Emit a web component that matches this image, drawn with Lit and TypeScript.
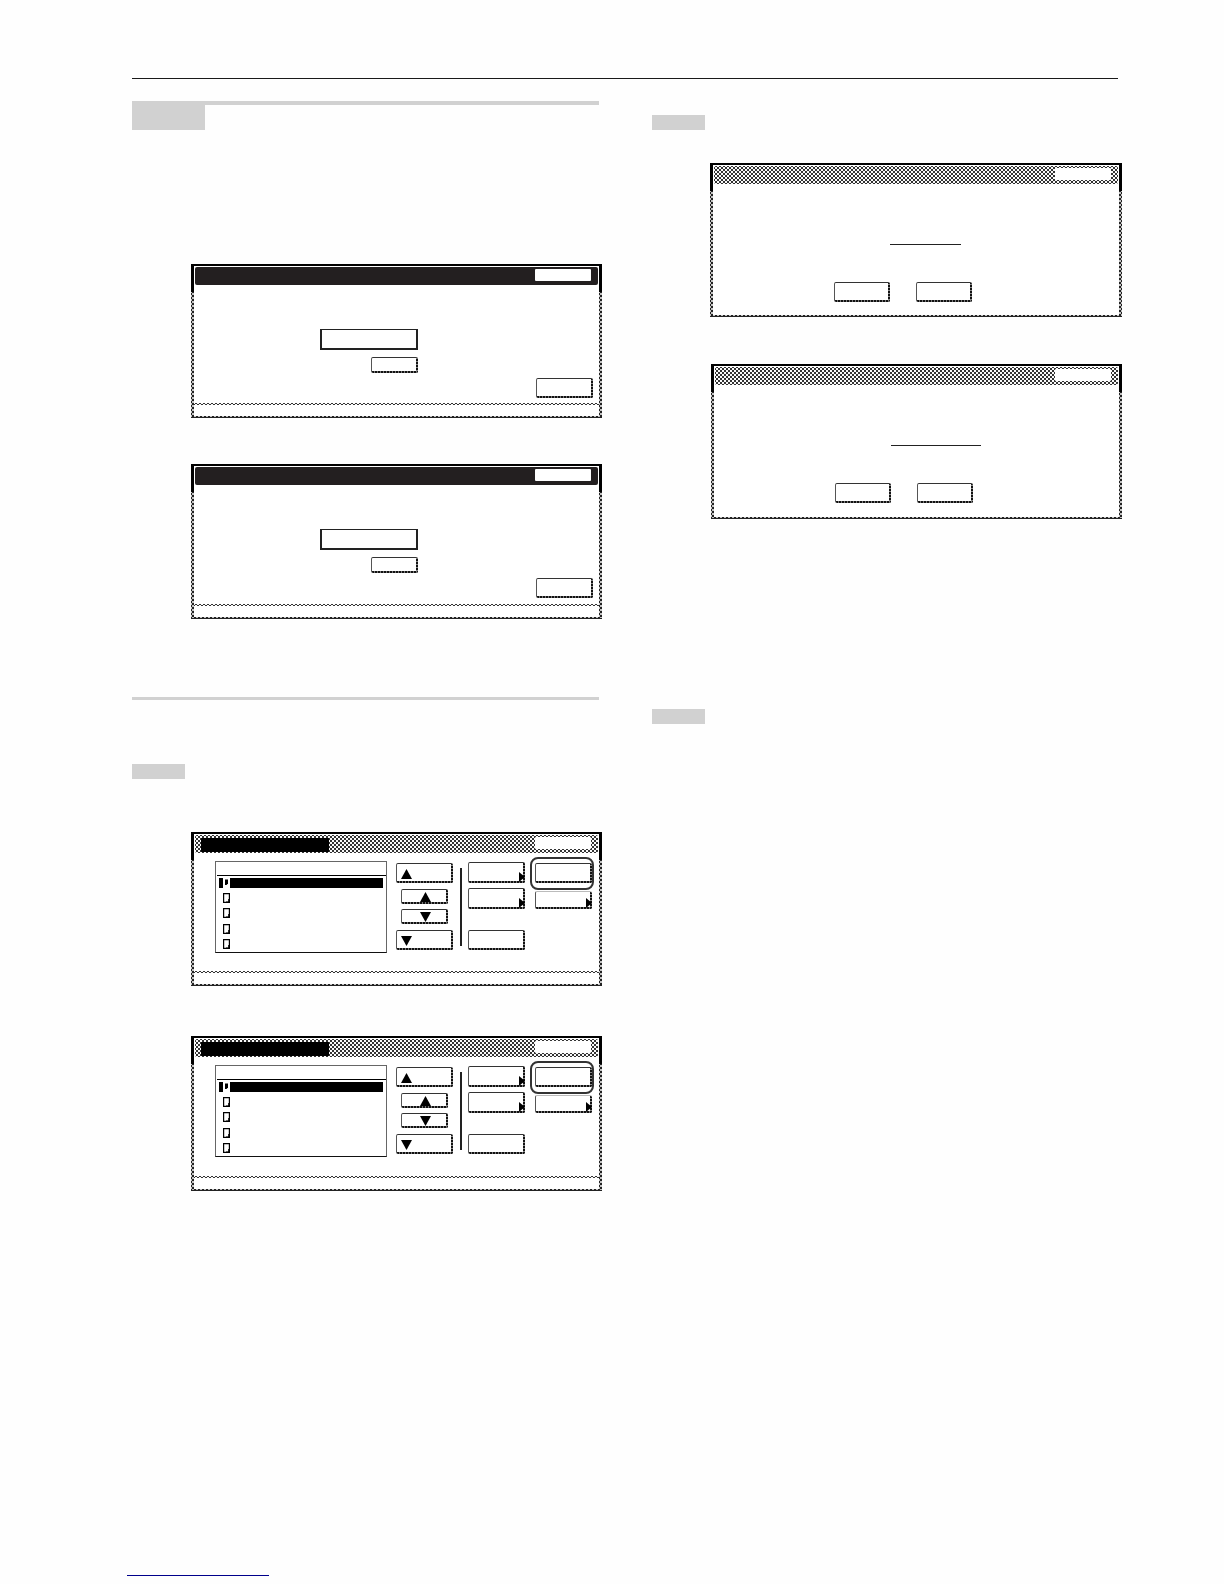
import { LitElement, html, css, svg } from "lit";
import { customElement } from "lit/decorators.js";

const tri = (down: boolean) => html`<svg class="tri" viewBox="0 0 11 10" width="11" height="10">
  ${down ? svg`<polygon points="0,0 11,0 5.5,10" fill="#000"/>` : svg`<polygon points="5.5,0 11,10 0,10" fill="#000"/>`}
</svg>`;

const page = (inv: boolean) => html`<svg class="doc" viewBox="0 0 7 10" width="7" height="10">
  ${inv
    ? svg`<path d="M0 0H7V10H0Z" fill="#fff"/><path d="M2 1.5H5V5.5L3.5 7H2Z" fill="#000"/>`
    : svg`<path d="M.6.6H6.4V9.4H.6Z" fill="#fff" stroke="#000" stroke-width="1.2"/>
          <path d="M7 6V10H3V8.4H5.2V6Z" fill="#000"/>`}
</svg>`;

@customElement("app-root")
export class AppRoot extends LitElement {
  static styles = css`
    :host {
      display: block;
      height: 1584px;
      background: #fefefe;
      font-family: "Liberation Sans", sans-serif;
      overflow: hidden;
    }
    .page { padding: 78px 0 0 132px; }
    .rule { width: 986px; height: 1px; background: #1a1a1a; }
    .cols { display: grid; grid-template-columns: 467px 470px; column-gap: 53px; }
    .col { display: flex; flex-direction: column; align-items: flex-start; }
    .sec { width: 467px; border-top: 4px solid #d1d1d1; margin-top: 22px; }
    .sec-block { width: 73px; height: 25px; background: #d1d1d1; }
    .divider { width: 467px; height: 3px; background: #d1d1d1; }
    .step { width: 53px; height: 15px; background: #d1d1d1; }
    .link { width: 142px; height: 1px; margin: 384px 0 0 -5px; background: #00008b; }

    .panel {
      box-sizing: border-box;
      width: 411px;
      height: 154px;
      padding: 2px 3px;
      background:
        linear-gradient(#222, #222) left bottom / 100% 1px no-repeat,
        linear-gradient(#000, #000) top / 100% 2px no-repeat,
        linear-gradient(#000, #000) left top / 3px 28px no-repeat,
        linear-gradient(#000, #000) right top / 3px 28px no-repeat,
        radial-gradient(circle, #fff 0.6px, transparent 1px) 0 0 / 4px 4px,
        radial-gradient(circle, #fff 0.6px, transparent 1px) 2px 2px / 4px 4px,
        #222;
    }
    .wide { width: 412px; }
    .tall { height: 155px; }
    .inner {
      box-sizing: border-box;
      height: 100%;
      padding: 1px 1px 0;
      background: #fff;
      display: flex;
      flex-direction: column;
    }
    .title {
      flex: none;
      height: 18px;
      box-sizing: border-box;
      padding-top: 2px;
      display: flex;
      align-items: flex-start;
      border-radius: 2px;
    }
    .title.solid { background: #231f20; }
    .title.dith, .dots {
      background:
        radial-gradient(circle, #fff 0.7px, transparent 1px) 0 0 / 4px 4px,
        radial-gradient(circle, #fff 0.7px, transparent 1px) 2px 2px / 4px 4px,
        #333;
    }
    .title-label { width: 128px; height: 14px; margin: 1px 0 0 6px; background: #000; border-radius: 1px; }
    .close { width: 56px; height: 12px; margin: 0 7px 0 auto; background: #fff; border-radius: 1px; }
    .body { flex: 1; min-height: 0; }
    .foot { flex: none; box-sizing: border-box; height: 13px; margin: 0 -1px; }
    .foot .dots { height: 2px; }

    .btn {
      box-sizing: border-box;
      position: relative;
      display: flex;
      align-items: center;
      border-top: 1px solid #333;
      border-left: 1px solid #555;
      border-radius: 2px;
      background:
        repeating-linear-gradient(90deg, #111 0 2px, #777 2px 3px) left bottom / 100% 2px no-repeat,
        repeating-linear-gradient(0deg, #111 0 2px, #888 2px 3px) right top / 2px 100% no-repeat,
        #fff;
    }

    .form { padding: 44px 0 0 125px; }
    .field { box-sizing: border-box; width: 98px; height: 21px; border: 2px solid #222; border-top-width: 1px; }
    .small { width: 47px; height: 16px; margin: 7px 0 0 51px; }
    .big { width: 57px; height: 20px; margin: 5px 0 0 216px; }

    .confirm .line { height: 1px; margin: 60px 0 0 176px; background: #222; width: 71px; }
    .confirm .line.long { width: 90px; }
    .actions { display: flex; gap: 26px; margin: 37px 0 0 120px; }
    .actions .btn { width: 56px; height: 20px; }

    .browser { display: flex; align-items: flex-start; padding: 8px 0 0 20px; }
    .list {
      box-sizing: border-box;
      width: 172px;
      height: 92px;
      border: 1px solid #666;
      border-bottom-color: #111;
      flex: none;
    }
    .list-head { height: 13px; margin-left: 1px; border-bottom: 1px solid #000; }
    .rows { display: flex; flex-direction: column; gap: 5.2px; padding: 2px 3px 0; }
    .row { height: 10px; padding-left: 4px; display: flex; align-items: center; }
    .row.sel { background: #000; }
    .doc { display: block; }
    .nav { width: 57px; margin: 2px 0 0 9px; display: flex; flex-direction: column; align-items: center; flex: none; }
    .nav .btn { width: 100%; height: 20px; padding-left: 4px; }
    .nav .btn.step-btn { width: 47px; height: 15px; padding: 0; justify-content: center; margin-top: 6px; }
    .nav .btn.step-btn + .step-btn { margin-top: 5px; }
    .nav .btn.step-btn + .btn:not(.step-btn) { margin-top: 6px; }
    .tri { display: block; }
    .vline { width: 2px; height: 78px; margin: 7px 0 0 7px; background: #222; flex: none; }
    .acol { width: 57px; margin: 1px 0 0 6px; display: flex; flex-direction: column; flex: none; }
    .acol .btn { height: 21px; margin-bottom: 5px; }
    .acol .btn.gap { height: 20px; margin: 16px 0 0; }
    .bcol { width: 57px; margin: 2px 0 0 10px; display: flex; flex-direction: column; gap: 8px; flex: none; }
    .bcol .btn { height: 20px; }
    .bcol .btn.plain { height: 18px; border-top-color: #bbb; }
    .more::after {
      content: "";
      position: absolute;
      right: 0;
      bottom: 1px;
      width: 6px;
      height: 10px;
      background: #000;
      clip-path: polygon(0 0, 100% 50%, 0 100%);
    }
    .ring::after {
      content: "";
      position: absolute;
      left: -6px;
      right: -2px;
      top: -7px;
      bottom: -7px;
      border: 2px solid #333;
      border-radius: 8px;
    }

    .m134 { margin: 134px 0 0 59px; }
    .m46 { margin: 46px 0 0 59px; }
    .m78 { margin-top: 78px; }
    .m64 { margin-top: 64px; }
    .m53 { margin: 53px 0 0 59px; }
    .m50 { margin: 50px 0 0 59px; }
    .s36 { margin-top: 36px; }
    .r33 { margin: 33px 0 0 58px; }
    .r47 { margin: 47px 0 0 59px; }
    .s190 { margin-top: 190px; }
  `;

  private form(cls: string) {
    return html`<div class="panel ${cls}"><div class="inner">
      <div class="title solid"><div class="close"></div></div>
      <div class="body form">
        <div class="field"></div>
        <div class="btn small"></div>
        <div class="btn big"></div>
      </div>
      <div class="foot"><div class="dots"></div></div>
    </div></div>`;
  }

  private confirm(cls: string, long: boolean) {
    return html`<div class="panel ${cls}"><div class="inner">
      <div class="title dith"><div class="close"></div></div>
      <div class="body confirm">
        <div class="line ${long ? "long" : ""}"></div>
        <div class="actions"><div class="btn"></div><div class="btn"></div></div>
      </div>
    </div></div>`;
  }

  private browser(cls: string) {
    return html`<div class="panel ${cls}"><div class="inner">
      <div class="title dith"><div class="title-label"></div><div class="close"></div></div>
      <div class="body browser">
        <div class="list">
          <div class="list-head"></div>
          <div class="rows">
            ${[0, 1, 2, 3, 4].map(
              (i) => html`<div class="row ${i === 0 ? "sel" : ""}">${page(i === 0)}</div>`
            )}
          </div>
        </div>
        <div class="nav">
          <div class="btn">${tri(false)}</div>
          <div class="btn step-btn">${tri(false)}</div>
          <div class="btn step-btn">${tri(true)}</div>
          <div class="btn">${tri(true)}</div>
        </div>
        <div class="vline"></div>
        <div class="acol">
          <div class="btn more"></div>
          <div class="btn more"></div>
          <div class="btn gap"></div>
        </div>
        <div class="bcol">
          <div class="btn ring"></div>
          <div class="btn plain more"></div>
        </div>
      </div>
      <div class="foot"><div class="dots"></div></div>
    </div></div>`;
  }

  render() {
    return html`<div class="page">
      <div class="rule"></div>
      <div class="cols">
        <div class="col">
          <div class="sec"><div class="sec-block"></div></div>
          ${this.form("m134")}
          ${this.form("m46 tall")}
          <div class="divider m78"></div>
          <div class="step m64"></div>
          ${this.browser("m53")}
          ${this.browser("m50 tall")}
          <div class="link"></div>
        </div>
        <div class="col">
          <div class="step s36"></div>
          ${this.confirm("wide r33", false)}
          ${this.confirm("r47 tall", true)}
          <div class="step s190"></div>
        </div>
      </div>
    </div>`;
  }
}
